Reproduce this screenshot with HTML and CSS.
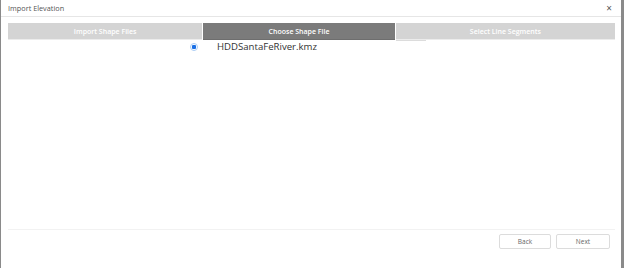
FILE: index.html
```html
<!DOCTYPE html>
<html lang="en">
<head>
	<meta charset="UTF-8">
	<title>Import Elevation</title>
	<link rel="stylesheet" href="styles.css">
</head>
<body>
	<div class="dialog">
		<div class="head">
			<span class="title">Import Elevation</span>
			<span class="close">&#215;</span>
		</div>
		<div class="tabs">
			<div class="tab">Import Shape Files</div>
			<div class="tab active">Choose Shape File</div>
			<div class="tab last">Select Line Segments</div>
		</div>
		<div class="body">
			<label class="file">
				<span class="radio"></span>
				<span class="name">HDDSantaFeRiver.kmz</span>
			</label>
		</div>
		<div class="foot">
			<button class="btn">Back</button>
			<button class="btn">Next</button>
		</div>
	</div>
</body>
</html>
```
FILE: styles.css
```css
	html, body {
		margin: 0;
		height: 100%;}
	body {
		font-family: 'Open Sans', sans-serif;
		background-color: #fff;}
	.dialog {
		height: 268px;
		box-sizing: border-box;
		border-left: 1px solid #8a8a8a;
		border-right: 3px solid #8a8a8a;
		display: flex;
		flex-direction: column;}
	.head {
		height: 17px;
		box-sizing: border-box;
		border-bottom: 1px solid #e6e6e6;
		display: flex;
		align-items: center;
		justify-content: space-between;
		padding: 0 9px 0 7px;}
	.title {
		font-size: 7.3px;
		color: #555;}
	.close {
		font-size: 10px;
		color: #555;
		line-height: 1;}
	.tabs {
		margin: 6px 6px 0 7px;
		display: grid;
		grid-template-columns: 195fr 192fr 220fr;
		gap: 1px;
		height: 17px;}
	.tab {
		background-color: #d4d4d4;
		color: #fff;
		font-size: 7px;
		font-weight: 600;
		display: flex;
		align-items: center;
		justify-content: center;
		border-bottom: 1px solid #ececec;}
	.tab.active {
		background-color: #7b7b7b;
		border-bottom-color: #6e6e6e;}
	.tab.last {
		position: relative;}
	.tab.last:after {
		content: '';
		position: absolute;
		left: 0;
		bottom: -2px;
		width: 30px;
		height: 1px;
		background-color: #dcdcdc;}
	.body {
		flex: 1;
		padding: 1px 0 0 189px;}
	.file {
		display: flex;
		align-items: center;
		height: 12px;}
	.radio {
		width: 6px;
		height: 6px;
		border-radius: 50%;
		border: 1px solid #a9ccf5;
		background: radial-gradient(circle, #1a6fe5 0, #1a6fe5 2px, #fff 2.5px);
		margin-right: 19px;}
	.name {
		font-size: 9.6px;
		color: #333;
		line-height: 12px;}
	.foot {
		margin: 0 6px 0 7px;
		border-top: 1px solid #f2f2f2;
		height: 39px;
		box-sizing: border-box;
		display: flex;
		justify-content: flex-end;
		align-items: flex-start;
		padding: 4px 5px 0 0;
		gap: 5px;}
	.btn {
		font-family: 'Open Sans', sans-serif;
		font-size: 6.5px;
		color: #666;
		background-color: #fff;
		border: 1px solid #dcdcdc;
		border-radius: 2px;
		height: 15px;
		width: 52px;
		padding: 0;}
	.btn + .btn {
		width: 54px;}
```
